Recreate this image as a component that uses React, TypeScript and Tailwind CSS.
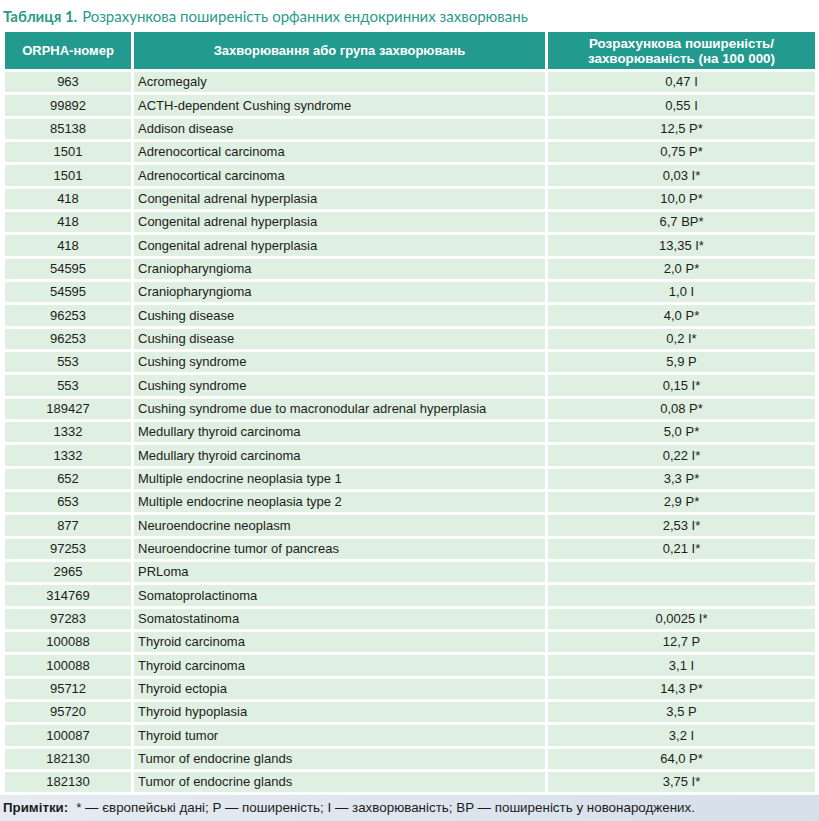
import React from "react";

type Row = [string, string, string];

const ROWS: Row[] = [
  ["963", "Acromegaly", "0,47 I"],
  ["99892", "ACTH-dependent Cushing syndrome", "0,55 I"],
  ["85138", "Addison disease", "12,5 P*"],
  ["1501", "Adrenocortical carcinoma", "0,75 P*"],
  ["1501", "Adrenocortical carcinoma", "0,03 I*"],
  ["418", "Congenital adrenal hyperplasia", "10,0 P*"],
  ["418", "Congenital adrenal hyperplasia", "6,7 BP*"],
  ["418", "Congenital adrenal hyperplasia", "13,35 I*"],
  ["54595", "Craniopharyngioma", "2,0 P*"],
  ["54595", "Craniopharyngioma", "1,0 I"],
  ["96253", "Cushing disease", "4,0 P*"],
  ["96253", "Cushing disease", "0,2 I*"],
  ["553", "Cushing syndrome", "5,9 P"],
  ["553", "Cushing syndrome", "0,15 I*"],
  ["189427", "Cushing syndrome due to macronodular adrenal hyperplasia", "0,08 P*"],
  ["1332", "Medullary thyroid carcinoma", "5,0 P*"],
  ["1332", "Medullary thyroid carcinoma", "0,22 I*"],
  ["652", "Multiple endocrine neoplasia type 1", "3,3 P*"],
  ["653", "Multiple endocrine neoplasia type 2", "2,9 P*"],
  ["877", "Neuroendocrine neoplasm", "2,53 I*"],
  ["97253", "Neuroendocrine tumor of pancreas", "0,21 I*"],
  ["2965", "PRLoma", ""],
  ["314769", "Somatoprolactinoma", ""],
  ["97283", "Somatostatinoma", "0,0025 I*"],
  ["100088", "Thyroid carcinoma", "12,7 P"],
  ["100088", "Thyroid carcinoma", "3,1 I"],
  ["95712", "Thyroid ectopia", "14,3 P*"],
  ["95720", "Thyroid hypoplasia", "3,5 P"],
  ["100087", "Thyroid tumor", "3,2 I"],
  ["182130", "Tumor of endocrine glands", "64,0 P*"],
  ["182130", "Tumor of endocrine glands", "3,75 I*"],
];

const cell = "bg-[#dfefe1] h-[20.33px] flex items-center text-[13px] text-[#1d1d1b]";

export default function App() {
  return (
    <div className="w-[819px] h-[821px] bg-white flex flex-col font-['Liberation_Sans',Arial,sans-serif]">
      <div className="h-[32px] pl-[3px] pt-[5px] text-[15px] text-[#2a9a8e] font-['Lato',sans-serif]">
        <span className="font-bold">Таблиця 1.</span>
        <span className="ml-[5px]">Розрахункова поширеність орфанних ендокринних захворювань</span>
      </div>

      <div className="pl-[5px] pr-[4px] pb-[3px] bg-white">
        <div className="grid grid-cols-[126px_411px_267px] gap-x-[3px] gap-y-[3px]">
          <div className="bg-[#229a8e] h-[37px] flex items-center justify-center text-white font-bold text-[13px]">
            ORPHA-номер
          </div>
          <div className="bg-[#229a8e] h-[37px] flex items-center justify-center text-white font-bold text-[13px]">
            Захворювання або група захворювань
          </div>
          <div className="bg-[#229a8e] h-[37px] flex flex-col items-center justify-center text-white font-bold text-[13.4px] leading-[15px]">
            <span>Розрахункова поширеність/</span>
            <span>захворюваність (на 100 000)</span>
          </div>

          {ROWS.map((r, i) => (
            <React.Fragment key={i}>
              <div className={`${cell} justify-center`}>{r[0]}</div>
              <div className={`${cell} pl-[4px]`}>{r[1]}</div>
              <div className={`${cell} justify-center`}>{r[2]}</div>
            </React.Fragment>
          ))}
        </div>
      </div>

      <div className="flex-1 bg-gradient-to-r from-[#e6ebf1] via-[#dde5ee] to-[#d6e0ea] pl-[3px] pt-[3px] text-[13px] text-[#1d1d1b]">
        <span className="font-bold text-[13.3px]">Примітки:</span>
        <span className="ml-[8px] text-[13.4px]">* — європейські дані; P — поширеність; I — захворюваність; BP — поширеність у новонароджених.</span>
      </div>
    </div>
  );
}
